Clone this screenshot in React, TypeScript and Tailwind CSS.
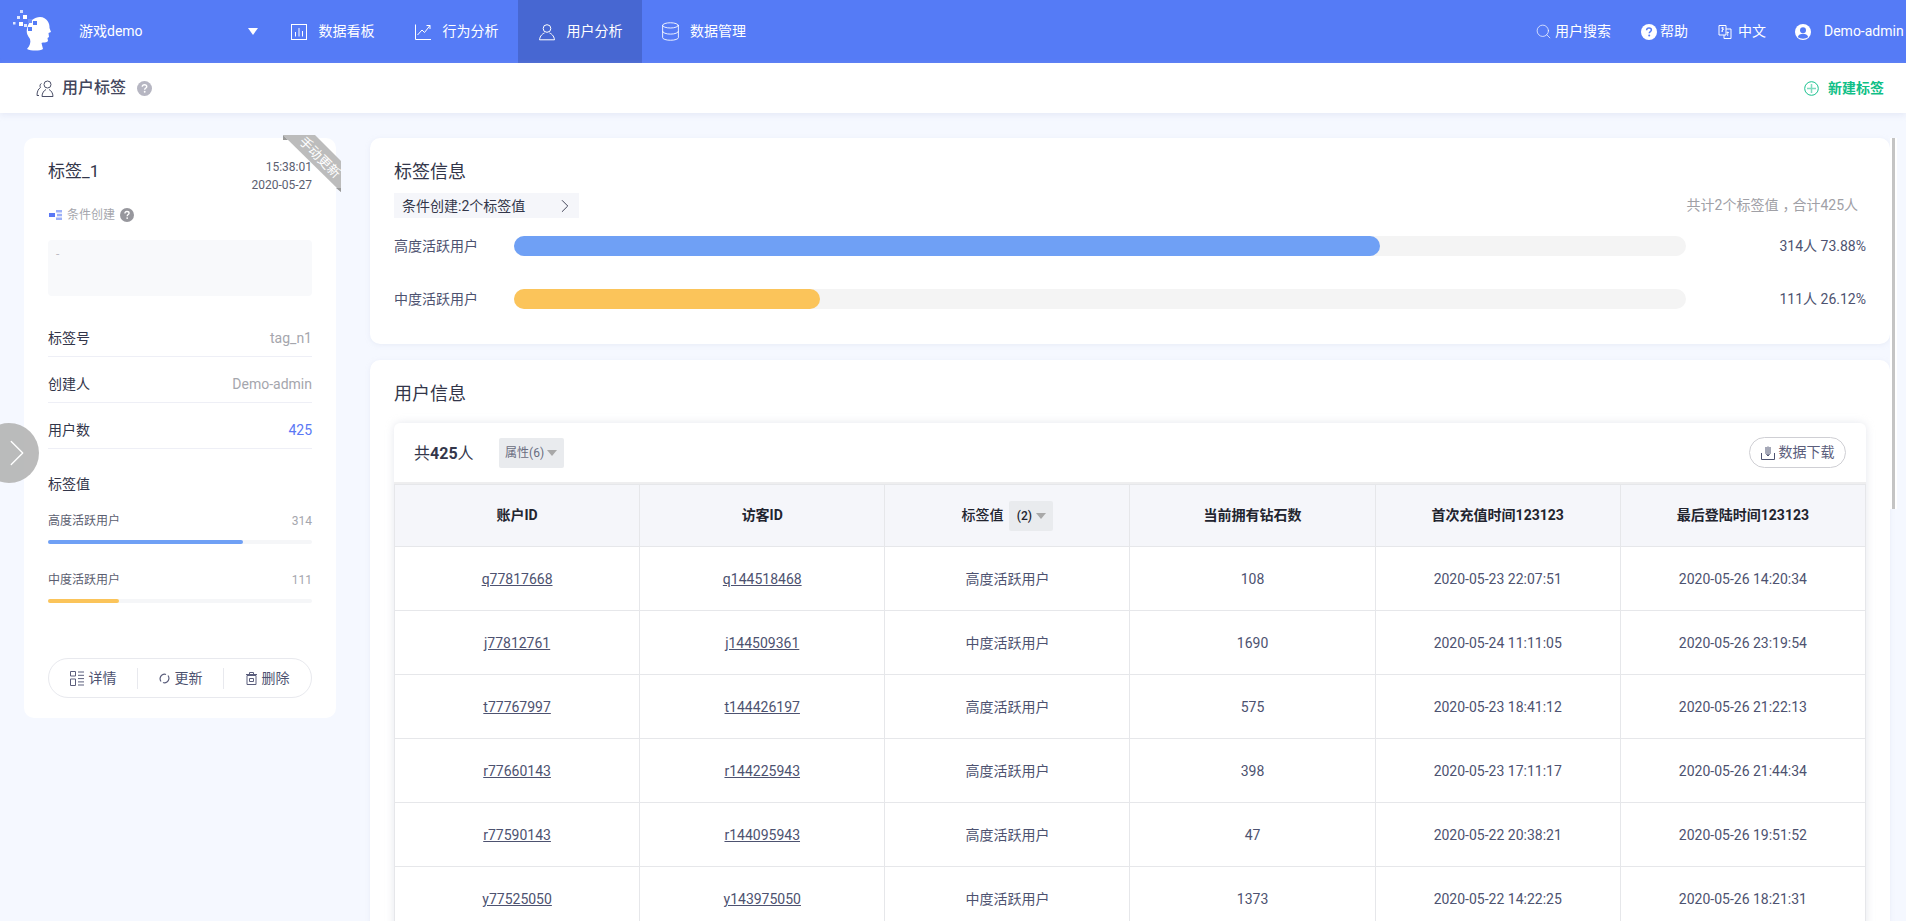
import React from 'react';
import { ChevronRight, Database, Search } from 'lucide-react';

const ROWS = [
  ['q77817668', 'q144518468', '高度活跃用户', '108', '2020-05-23 22:07:51', '2020-05-26 14:20:34'],
  ['j77812761', 'j144509361', '中度活跃用户', '1690', '2020-05-24 11:11:05', '2020-05-26 23:19:54'],
  ['t77767997', 't144426197', '高度活跃用户', '575', '2020-05-23 18:41:12', '2020-05-26 21:22:13'],
  ['r77660143', 'r144225943', '高度活跃用户', '398', '2020-05-23 17:11:17', '2020-05-26 21:44:34'],
  ['r77590143', 'r144095943', '高度活跃用户', '47', '2020-05-22 20:38:21', '2020-05-26 19:51:52'],
  ['y77525050', 'y143975050', '中度活跃用户', '1373', '2020-05-22 14:22:25', '2020-05-26 18:21:31'],
];

function Logo() {
  return (
    <svg width="44" height="52" viewBox="0 0 44 52" className="ml-[10px] shrink-0">
      <path
        d="M17 23C18 15 25 11 30 11C37 11 40 18 39.500 22L41 26L38.500 27L39 31L37.500 32L38 35C37 37 33 36 31.500 37L33 43C30 45 21 45 17 43C20 40 21 36 20 33C18 30 16 27 17 23Z"
        fill="#fff"
      />
      <rect x="10" y="4" width="3" height="3" fill="#cfdcff" />
      <rect x="7" y="10" width="3" height="3" fill="#dfe7ff" />
      <rect x="13" y="9" width="4" height="4" fill="#fff" />
      <rect x="3" y="16" width="2.500" height="2.500" fill="#dfe7ff" />
      <rect x="9" y="16" width="4" height="4" fill="#fff" />
      <rect x="14" y="18" width="3" height="3" fill="#dfe7ff" />
      <rect x="18" y="13" width="4" height="4" fill="#6f8ff8" />
      <rect x="23" y="15" width="4" height="4" fill="#537bf6" />
      <rect x="18" y="21" width="4" height="4" fill="#537bf6" />
    </svg>
  );
}

function BoardIcon() {
  return (
    <svg width="18" height="18" viewBox="0 0 18 18" fill="none" stroke="#fff" strokeWidth="1">
      <rect x="1.500" y="1.500" width="15" height="15" />
      <path d="M5.500 13.500V9M9 13.500V5M12.500 13.500V8" />
    </svg>
  );
}

function TrendIcon() {
  return (
    <svg width="18" height="18" viewBox="0 0 18 18" fill="none" stroke="#fff" strokeWidth="1">
      <path d="M1.500 1.500V16.500H17" />
      <path d="M3.500 12L8 7L10.500 9.500L16 2.500M12.500 2.500H16V6" />
    </svg>
  );
}

function PersonIcon() {
  return (
    <svg width="18" height="18" viewBox="0 0 18 18" fill="none" stroke="#fff" strokeWidth="1">
      <circle cx="9" cy="5.500" r="3.800" />
      <path d="M1.500 16.800C2 12.500 5 10.500 6.500 10M16.500 16.800C16 12.500 13 10.500 11.500 10M1.500 16.800H16.500" />
    </svg>
  );
}

function HelpDot({ size, bg, fg }: { size: number; bg: string; fg: string }) {
  return (
    <svg width={size} height={size} viewBox="0 0 16 16" className="shrink-0">
      <circle cx="8" cy="8" r="8" fill={bg} />
      <path d="M5.600 6.200C5.700 4.700 6.800 4 8 4C9.400 4 10.400 4.800 10.400 6C10.400 7.500 8.200 7.600 8.200 9.300" fill="none" stroke={fg} strokeWidth="1.500" />
      <circle cx="8.200" cy="11.500" r="1" fill={fg} />
    </svg>
  );
}

function TranslateIcon() {
  return (
    <svg width="14" height="16" viewBox="0 0 14 16" fill="none" stroke="#fff" strokeWidth="1">
      <path d="M1 1.500H8V11H1Z" />
      <path d="M8 5H13V14.500H6V11" />
      <path d="M3 4H6M4.500 3V8M3 7.500L6 5M8.500 8.500H11M9.700 7.500V12" strokeWidth="0.800" />
    </svg>
  );
}

function AvatarIcon() {
  return (
    <svg width="16" height="16" viewBox="0 0 16 16">
      <circle cx="8" cy="8" r="8" fill="#fff" />
      <circle cx="8" cy="6.200" r="3" fill="#537bf6" />
      <path d="M2.800 13C3.500 10.800 5.500 9.800 8 9.800C10.500 9.800 12.500 10.800 13.200 13C10.500 15.200 5.500 15.200 2.800 13Z" fill="#537bf6" />
    </svg>
  );
}

function TagUsersIcon() {
  return (
    <svg width="18" height="17" viewBox="0 0 18 17" fill="none" stroke="#4c5068" strokeWidth="1">
      <circle cx="11.500" cy="4.500" r="3.500" />
      <path d="M6 16.500H17C17 13 15 10.500 13 9.500" />
      <path d="M5.500 3.500C4 4 3.500 6 4.500 7.500C2 9 1 12 1 15.500H3" />
      <path d="M10 9.500C8 10.500 6 13 6 16.500" />
    </svg>
  );
}

function PlusCircleIcon() {
  return (
    <svg width="15" height="15" viewBox="0 0 15 15" fill="none">
      <circle cx="7.500" cy="7.500" r="6.800" stroke="#17c08d" />
      <path d="M7.500 3V12M3 7.500H12" stroke="#7edcc0" strokeWidth="1.500" />
    </svg>
  );
}

function NavItem({ icon, label, active }: { icon: React.ReactNode; label: string; active?: boolean }) {
  return (
    <div className={`flex h-full w-[124px] items-center justify-center ${active ? 'bg-[#4767d2]' : ''}`}>
      <span className="flex items-center gap-[11px]">
        {icon}
        <span className="text-[14px] text-white">{label}</span>
      </span>
    </div>
  );
}

function TagRow({ label, value, blue }: { label: string; value: string; blue?: boolean }) {
  return (
    <div className="flex h-[46px] items-center justify-between border-b border-[#eeeff6] pt-[10px] text-[14px]">
      <span className="text-[#33364a]">{label}</span>
      <span className={blue ? 'text-[#5a78f5]' : 'text-[#a5a6ad]'}>{value}</span>
    </div>
  );
}

function MiniBar({ label, value, width, color }: { label: string; value: string; width: string; color: string }) {
  return (
    <div>
      <div className="flex h-[18px] items-center justify-between text-[12px]">
        <span className="text-[#5b5e70]">{label}</span>
        <span className="text-[#a5a6ad]">{value}</span>
      </div>
      <div className="mt-[10px] h-[4px] rounded-full bg-[#f5f6f8]">
        <div className={`h-full rounded-full ${color}`} style={{ width }} />
      </div>
    </div>
  );
}

function InfoBar({ label, value, width, color }: { label: string; value: string; width: string; color: string }) {
  return (
    <div className="flex h-[20px] items-center">
      <span className="w-[120px] shrink-0 text-[14px] text-[#4d5270]">{label}</span>
      <div className="h-[20px] w-[1172px] shrink-0 rounded-full bg-[#f4f4f4]">
        <div className={`h-full rounded-full ${color}`} style={{ width }} />
      </div>
      <span className="flex-1 text-right text-[14px] text-[#4d5270]">{value}</span>
    </div>
  );
}

export default function App() {
  return (
    <div className="relative flex h-[921px] w-[1906px] flex-col overflow-hidden bg-[#f5f8ff] font-['Roboto','Noto_Sans_CJK_SC',sans-serif]">
      {/* top nav */}
      <header className="flex h-[63px] shrink-0 items-center bg-[#557bf6] text-white">
        <Logo />
        <span className="ml-[25px] w-[169px] text-[14px]">游戏demo</span>
        <span className="h-0 w-0 border-x-[5px] border-t-[7px] border-x-transparent border-t-white" />
        <div className="ml-[12px] flex h-full">
          <NavItem icon={<BoardIcon />} label="数据看板" />
          <NavItem icon={<TrendIcon />} label="行为分析" />
          <NavItem icon={<PersonIcon />} label="用户分析" active />
          <NavItem icon={<Database size={21} strokeWidth={1} className="-mx-[2px]" />} label="数据管理" />
        </div>
        <div className="ml-auto flex items-center text-[14px]">
          <Search size={17} strokeWidth={1} />
          <span className="ml-[3px]">用户搜索</span>
          <span className="ml-[30px]"><HelpDot size={16} bg="#fff" fg="#557bf6" /></span>
          <span className="ml-[3px]">帮助</span>
          <span className="ml-[30px] flex"><TranslateIcon /></span>
          <span className="ml-[6px]">中文</span>
          <span className="ml-[29px] flex"><AvatarIcon /></span>
          <span className="ml-[13px] w-[82px] whitespace-nowrap">Demo-admin</span>
        </div>
      </header>

      {/* sub header */}
      <div className="z-10 flex h-[50px] shrink-0 items-center justify-between bg-white pl-[36px] pr-[22px] shadow-[0_2px_6px_rgba(200,205,230,0.35)]">
        <div className="flex items-center">
          <TagUsersIcon />
          <span className="ml-[8px] text-[16px] font-medium text-[#43465c]">用户标签</span>
          <span className="ml-[11px]"><HelpDot size={15} bg="#b6b6c2" fg="#fff" /></span>
        </div>
        <div className="flex items-center">
          <PlusCircleIcon />
          <span className="ml-[9px] text-[14px] font-bold text-[#10bf87]">新建标签</span>
        </div>
      </div>

      <div className="flex min-h-0 flex-1 items-start pl-[24px] pt-[25px]">
        {/* left card */}
        <aside className="relative h-[580px] w-[312px] shrink-0 rounded-[10px] bg-white px-[24px] pt-[20px]">
          <div className="flex items-start justify-between">
            <span className="pt-[1px] text-[17px] text-[#33364a]">标签_1</span>
            <div className="text-right text-[12px] leading-[18px] text-[#5b5e70]">
              <div>15:38:01</div>
              <div>2020-05-27</div>
            </div>
          </div>
          <svg width="58" height="58" viewBox="0 0 58 58" className="absolute right-[-5px] top-[-3px]">
            <path d="M0 0H32L58 26V57Z" fill="#bcbcbc" />
            <path d="M0 0L5 5H0Z" fill="#9a9a9a" />
            <path d="M53 53H58V57Z" fill="#9a9a9a" />
          </svg>
          <span className="absolute right-[-14px] top-[13px] w-[60px] rotate-45 text-center text-[13px] leading-none whitespace-nowrap text-white">手动更新</span>
          <div className="mt-[12px] flex items-center text-[12px] text-[#a5a6ad]">
            <svg width="13" height="10" viewBox="0 0 13 10" className="ml-[1px]">
              <rect x="0" y="3" width="6" height="4" fill="#5a78f5" />
              <rect x="7" y="0" width="6" height="2.500" fill="#9db0f8" />
              <rect x="8" y="3.800" width="5" height="2.500" fill="#9db0f8" />
              <rect x="7" y="7.500" width="6" height="2.500" fill="#9db0f8" />
            </svg>
            <span className="ml-[5px]">条件创建</span>
            <span className="ml-[5px]"><HelpDot size={14} bg="#97979d" fg="#fff" /></span>
          </div>
          <div className="mt-[16px] h-[56px] rounded-[4px] bg-[#f8f9fb] pl-[8px] pt-[5px] text-[12px] text-[#bdbdc4]">-</div>
          <div className="mt-[15px]">
            <TagRow label="标签号" value="tag_n1" />
            <TagRow label="创建人" value="Demo-admin" />
            <TagRow label="用户数" value="425" blue />
          </div>
          <div className="mt-[24px] text-[14px] leading-[22px] text-[#33364a]">标签值</div>
          <div className="mt-[17px] flex flex-col gap-[27px]">
            <MiniBar label="高度活跃用户" value="314" width="73.880%" color="bg-[#6fa0f5]" />
            <MiniBar label="中度活跃用户" value="111" width="26.880%" color="bg-[#fbc45a]" />
          </div>
          <div className="mt-[55px] flex h-[40px] items-center rounded-full border border-[#e8e9ee] text-[14px] text-[#4d5270]">
            <div className="flex h-[21px] w-[89px] items-center justify-center gap-[4px] border-r border-[#e8e9ee]">
              <svg width="15" height="15" viewBox="0 0 15 15" fill="none" stroke="#5b5e7c" strokeWidth="1">
                <path d="M.500.500H5.500V5H.500ZM.500 8H5.500V14.500H.500ZM8 1H14M8 4.300H14M8 7.600H14M8 10.900H14M8 14H14" />
              </svg>
              详情
            </div>
            <div className="flex h-[21px] w-[86px] items-center justify-center gap-[5px] border-r border-[#e8e9ee]">
              <svg width="11" height="11" viewBox="0 0 11 11" fill="none" stroke="#5b5e7c" strokeWidth="1.200">
                <path d="M2 8.500C0.500 6.500 0.800 3.500 3 2C4.500 1 6 1 7 1.500M9 2.500C10.500 4.500 10.200 7.500 8 9C6.500 10 5 10 4 9.500" />
              </svg>
              更新
            </div>
            <div className="flex h-[21px] flex-1 items-center justify-center gap-[5px]">
              <svg width="11" height="13" viewBox="0 0 11 13" fill="none" stroke="#5b5e7c" strokeWidth="1">
                <path d="M1 3.500H10V12.500H1ZM0 2.500H11M3.500 2.500V.500H7.500V2.500M3.500 6.500H7.500V9.500H3.500Z" />
              </svg>
              删除
            </div>
          </div>
        </aside>

        {/* right column */}
        <main className="ml-[34px] flex w-[1520px] shrink-0 flex-col gap-[16px]">
          <section className="h-[206px] rounded-[10px] bg-white pl-[24px] pr-[24px] pt-[20px] shadow-[0_1px_4px_rgba(220,225,240,0.5)]">
            <div className="text-[18px] leading-[28px] text-[#33364a]">标签信息</div>
            <div className="mt-[7px] flex items-center justify-between">
              <div className="flex h-[25px] w-[185px] items-center justify-between bg-[#f5f6fa] pl-[8px] pr-[3px] text-[14px] text-[#33364a]">
                <span className="pt-[1px]">条件创建:2个标签值</span>
                <ChevronRight size={22} strokeWidth={1} />
              </div>
              <span className="pr-[8px] text-[14px] text-[#a0a0a6]">
                共计2个标签值<span className="ml-[4px] mr-[-4px] inline-block">，</span>合计425人
              </span>
            </div>
            <div className="mt-[18px] flex flex-col gap-[33px]">
              <InfoBar label="高度活跃用户" value="314人 73.88%" width="73.880%" color="bg-[#6fa0f5]" />
              <InfoBar label="中度活跃用户" value="111人 26.12%" width="26.120%" color="bg-[#fbc45a]" />
            </div>
          </section>

          <section className="rounded-[10px] bg-white px-[24px] pt-[20px] shadow-[0_1px_4px_rgba(220,225,240,0.5)]">
            <div className="text-[18px] leading-[28px] text-[#33364a]">用户信息</div>
            <div className="mt-[15px] rounded-t-[6px] bg-white shadow-[0_0_8px_rgba(190,195,210,0.4)]">
              <div className="flex h-[61px] items-center border-b-2 border-[#eeeeef] pl-[20px] pr-[20px]">
                <span className="pt-[2px] text-[16px] text-[#33364a]">共<b>425</b>人</span>
                <span className="ml-[25px] flex h-[30px] w-[65px] items-center justify-center gap-[3px] rounded-[2px] bg-[#e9ebee] text-[12px] text-[#6a6d80]">
                  属性(6)
                  <span className="h-0 w-0 border-x-[5px] border-t-[6px] border-x-transparent border-t-[#a8a8a8]" />
                </span>
                <span className="ml-auto flex h-[31px] w-[97px] items-center justify-center gap-[4px] rounded-full border border-[#cfcfd4] text-[14px] text-[#5b5e7c]">
                  <svg width="14" height="14" viewBox="0 0 14 14" fill="none" stroke="#4d5270" strokeWidth="1">
                    <path d="M.500 7V13.500H13.500V7M7 .500V10M5 1V7.500L7 10L9 7.500V1" />
                  </svg>
                  数据下载
                </span>
              </div>
              <table className="w-full table-fixed border-collapse text-center text-[14px]">
                <thead>
                  <tr className="h-[62px] bg-[#f5f6fa] font-bold text-[#22242f]">
                    <th className="border border-[#e6e7ea]">账户ID</th>
                    <th className="border border-[#e6e7ea]">访客ID</th>
                    <th className="border border-[#e6e7ea]">
                      <span className="inline-flex items-center font-medium">
                        标签值
                        <span className="ml-[6px] flex h-[30px] w-[44px] items-center justify-center gap-[4px] rounded-[2px] bg-[#e9ebee] text-[12px]">
                          (2)
                          <span className="h-0 w-0 border-x-[5px] border-t-[6px] border-x-transparent border-t-[#a8a8a8]" />
                        </span>
                      </span>
                    </th>
                    <th className="border border-[#e6e7ea]">当前拥有钻石数</th>
                    <th className="border border-[#e6e7ea]">首次充值时间123123</th>
                    <th className="border border-[#e6e7ea]">最后登陆时间123123</th>
                  </tr>
                </thead>
                <tbody className="text-[#4d5270]">
                  {ROWS.map((row) => (
                    <tr key={row[0]} className="h-[64px]">
                      <td className="border border-[#e6e7ea] pt-[2px] underline">{row[0]}</td>
                      <td className="border border-[#e6e7ea] pt-[2px] underline">{row[1]}</td>
                      <td className="border border-[#e6e7ea] pt-[2px]">{row[2]}</td>
                      <td className="border border-[#e6e7ea] pt-[2px]">{row[3]}</td>
                      <td className="border border-[#e6e7ea] pt-[2px]">{row[4]}</td>
                      <td className="border border-[#e6e7ea] pt-[2px]">{row[5]}</td>
                    </tr>
                  ))}
                </tbody>
              </table>
            </div>
          </section>
        </main>
      </div>

      {/* collapse handle */}
      <div className="absolute left-[-21px] top-[423px] flex h-[60px] w-[60px] items-center justify-end rounded-full bg-[#b4b4b4]/90">
        <ChevronRight size={46} strokeWidth={0.700} className="-mr-[1px] shrink-0 text-white" />
      </div>

      {/* scrollbar */}
      <div className="absolute left-[1890px] top-[138px] h-[371px] w-[7px] bg-white">
        <div className="ml-[2px] h-full w-[3px] bg-[#c4c4c4]" />
      </div>
    </div>
  );
}
